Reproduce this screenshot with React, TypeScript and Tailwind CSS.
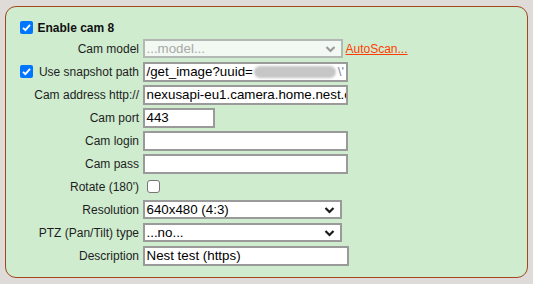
import React from "react";

const font = { fontFamily: '"Liberation Sans", Arial, sans-serif' };

function Chevron({ color = "#222" }: { color?: string }) {
  return (
    <svg width="11" height="8" viewBox="0 0 11 8" className="absolute right-[5px] top-1/2 -translate-y-1/2">
      <path d="M1.5 2 L5.5 6 L9.5 2" fill="none" stroke={color} strokeWidth="2.2" />
    </svg>
  );
}

function Label({ children }: { children: React.ReactNode }) {
  return <div className="flex h-[23px] items-center justify-end whitespace-nowrap text-[12px] text-[#1e1e1e]">{children}</div>;
}

function TextBox({ w, value }: { w: string; value?: string }) {
  return (
    <div className="flex h-[23px] items-center">
      <div className={`${w} flex h-[20px] items-center overflow-hidden whitespace-nowrap border-2 border-[#9a9a9a] bg-white px-[2px] text-[13.33px] text-black`}>
        {value}
      </div>
    </div>
  );
}

function SelectBox({ w, value, disabled }: { w: string; value: string; disabled?: boolean }) {
  return (
    <div className="flex h-[23px] items-center">
      <div
        className={`${w} relative flex h-[19px] items-center border-2 px-[2px] text-[13.33px] ${
          disabled ? "border-[#b4b8b4] bg-[#f2f8f2] text-[#a8aaa8]" : "border-[#9a9a9a] bg-white text-black"
        }`}
      >
        {value}
        <Chevron color={disabled ? "#9a9a9a" : "#1a1a1a"} />
      </div>
    </div>
  );
}

function Check({ checked }: { checked?: boolean }) {
  return checked ? (
    <span className="inline-flex h-[13px] w-[13px] shrink-0 items-center justify-center rounded-[2px] bg-[#0075ff]">
      <svg width="11" height="11" viewBox="0 0 11 11">
        <path d="M2 5.8 L4.4 8.2 L9 2.8" fill="none" stroke="white" strokeWidth="1.9" />
      </svg>
    </span>
  ) : (
    <span className="inline-block h-[13px] w-[13px] shrink-0 rounded-[3px] border border-[#767676] bg-white" />
  );
}

export default function App() {
  return (
    <div className="h-[284px] w-[533px] bg-[#dfdbd9] pl-[5px] pt-[6px]" style={font}>
      <div className="h-[272px] w-[523px] rounded-[11px] border-[1.5px] border-[#a3451d] bg-[#cfeccf] pt-[11px]">
        <div className="flex h-[19px] items-center gap-[5px] pl-[13.5px]">
          <Check checked />
          <span className="text-[12px] font-bold text-[#111]">Enable cam 8</span>
        </div>
        <div className="grid grid-cols-[133px_auto] gap-x-[3.5px]">
          <Label>Cam model</Label>
          <div className="flex items-center gap-[3px]">
            <SelectBox w="w-[200px]" value="...model..." disabled />
            <span className="text-[12px] text-[#ff3d00] underline">AutoScan...</span>
          </div>
          <Label>
            <span className="flex items-center gap-[6px]">
              <Check checked />
              Use snapshot path
            </span>
          </Label>
          <div className="flex h-[23px] items-center">
            <div className="flex h-[20px] w-[205px] items-center overflow-hidden whitespace-nowrap border-2 border-[#9a9a9a] bg-white px-[2px] text-[13.33px] text-black">
              /get_image?uuid=
              <span className="ml-[1px] inline-block h-[12px] w-[82px] shrink-0 rounded-full bg-[#c6c6c6] blur-[1px]" />
              <span className="ml-[2px] text-[#7a8aa0]">\'</span>
            </div>
          </div>
          <Label>Cam address http://</Label>
          <TextBox w="w-[205px]" value="nexusapi-eu1.camera.home.nest.com" />
          <Label>Cam port</Label>
          <TextBox w="w-[72px]" value="443" />
          <Label>Cam login</Label>
          <TextBox w="w-[205px]" />
          <Label>Cam pass</Label>
          <TextBox w="w-[205px]" />
          <Label>Rotate (180')</Label>
          <div className="flex h-[23px] items-center pl-[4px]">
            <Check />
          </div>
          <Label>Resolution</Label>
          <SelectBox w="w-[199px]" value="640x480 (4:3)" />
          <Label>PTZ (Pan/Tilt) type</Label>
          <SelectBox w="w-[199px]" value="...no..." />
          <Label>Description</Label>
          <TextBox w="w-[206px]" value="Nest test (https)" />
        </div>
      </div>
    </div>
  );
}
